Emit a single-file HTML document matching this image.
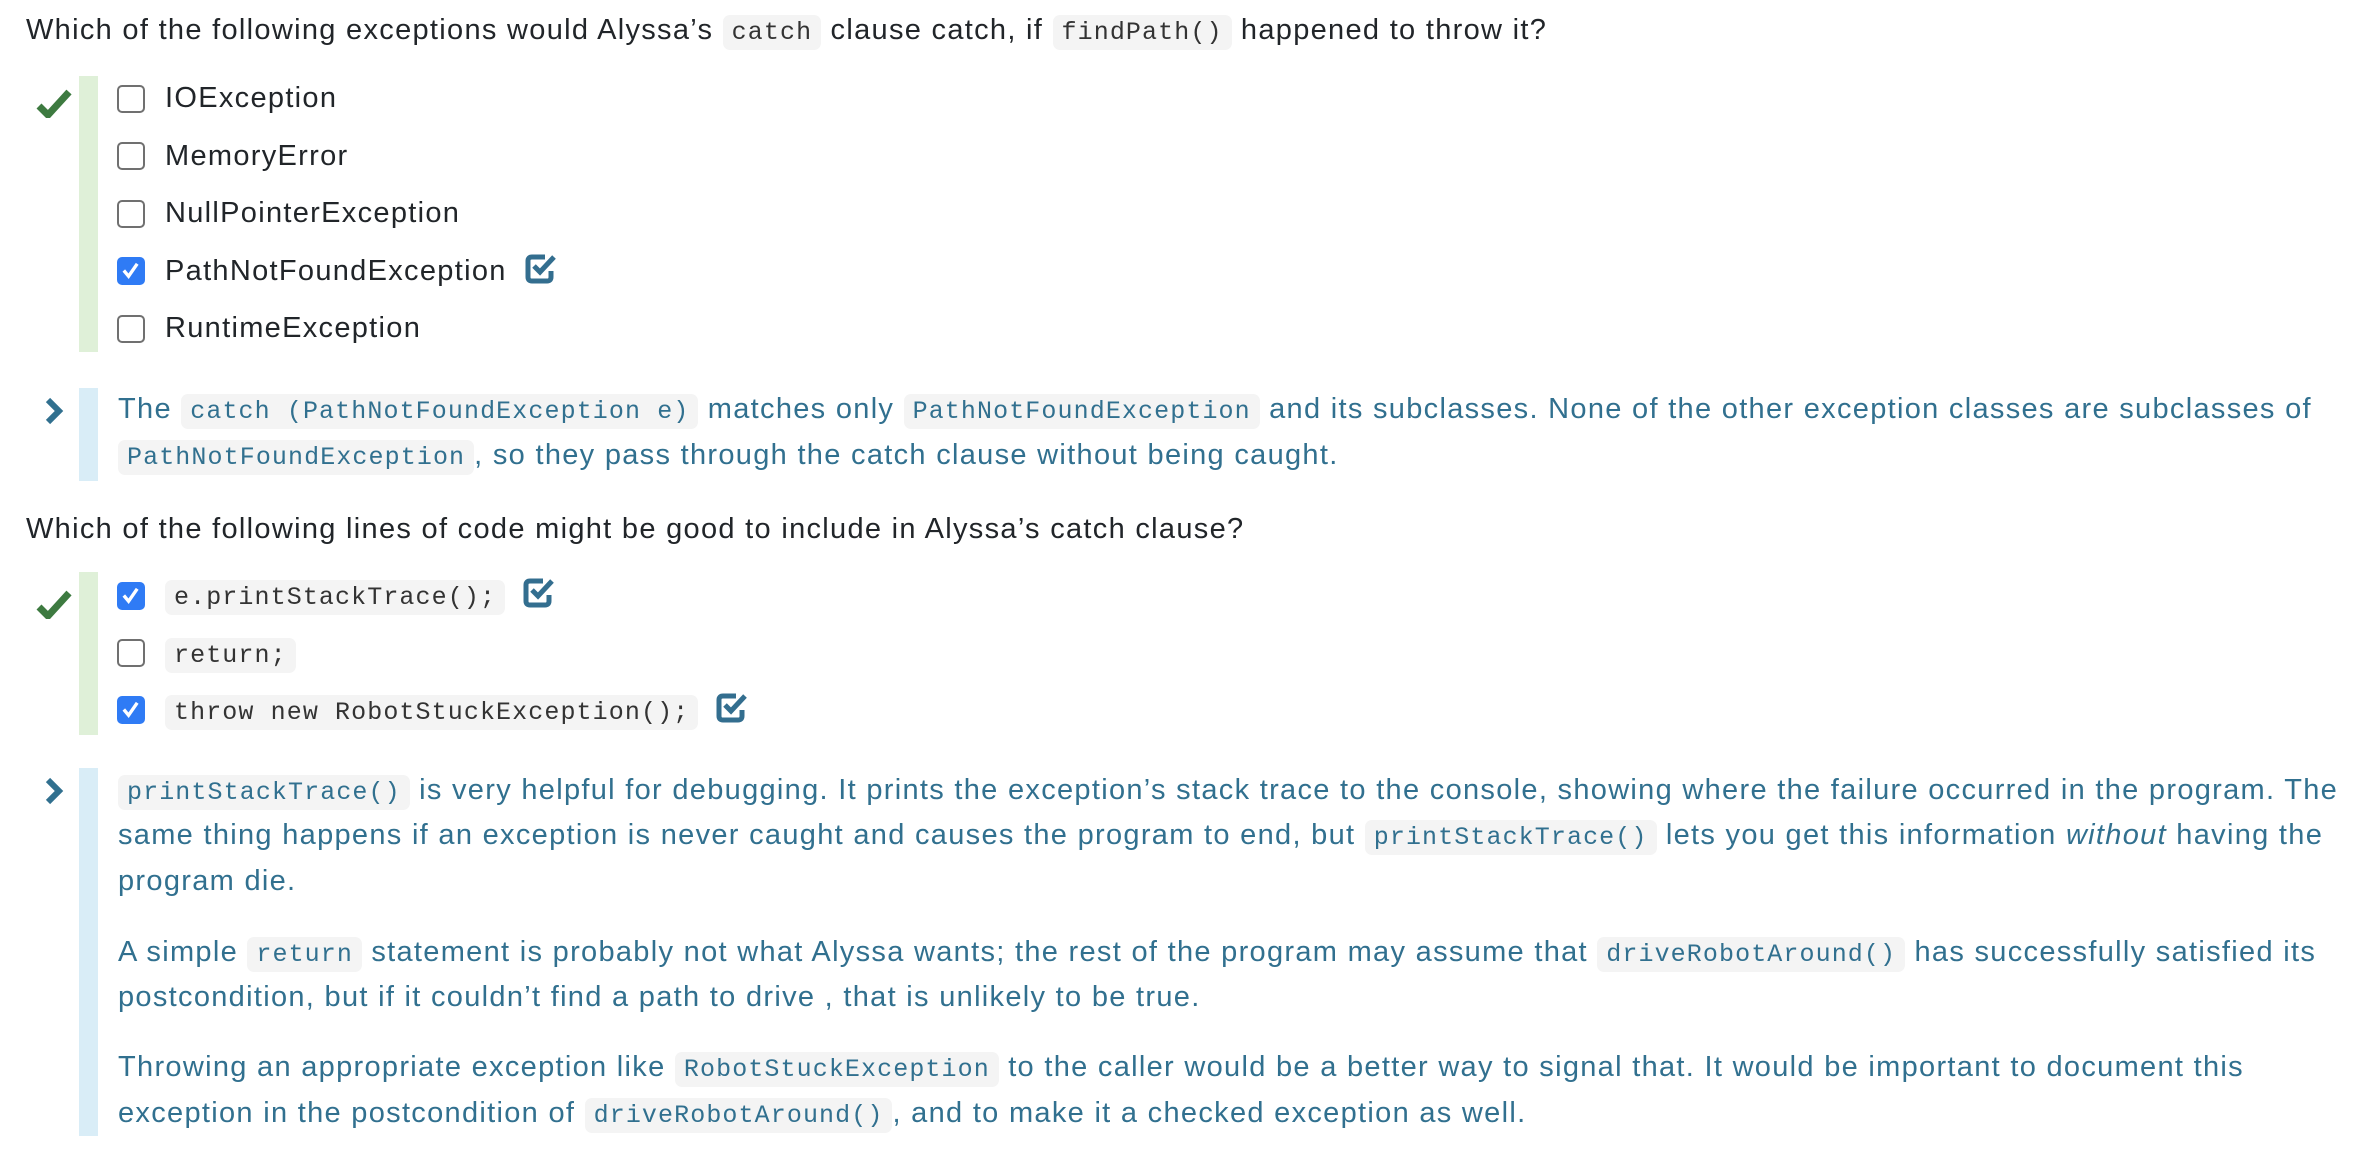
<!DOCTYPE html>
<html><head><meta charset="utf-8"><style>
*{margin:0;padding:0;box-sizing:border-box}
body{width:2374px;height:1153px;background:#fff;position:relative;overflow:hidden;font-family:"Liberation Sans",Arial,sans-serif;font-size:29px;letter-spacing:1.3px;color:#212529}
.a{position:absolute;white-space:nowrap;line-height:45px}
.info{color:#31708f}
code{font-family:"Liberation Mono",monospace;font-size:25px;letter-spacing:1.1px;background:#f4f4f4;border-radius:7px;padding:3px 9px;color:#333}
.info code{color:#31708f}
.bar{position:absolute;width:19px}
.g{background:#dff0d8}
.b{background:#d9edf7}
.cb{position:absolute;left:117px;width:28px;height:28px;border:2.5px solid #707070;border-radius:5px;background:#fff}
.cb.on{background:#2f7bf5;border-color:#2f7bf5}
.lbl{position:absolute;left:165px;line-height:45px;white-space:nowrap}
.ic{display:inline-block;vertical-align:-4px;margin-left:18px}
p.l{position:absolute;left:118px;white-space:nowrap;line-height:45.5px}
</style></head><body>
<svg width="0" height="0" style="position:absolute"><defs>
<symbol id="ok" viewBox="0 0 36 30"><path d="M3 19 L12 28 L33 5" fill="none" stroke="#3d7a40" stroke-width="7"/></symbol>
<symbol id="sq" viewBox="0 0 32 30"><path d="M20 3 H7 Q3 3 3 7 V23 Q3 27 7 27 H22 Q26 27 26 23 V17" fill="none" stroke="#336e8f" stroke-width="5"/><path d="M9 12 L15 18 L29 3" fill="none" stroke="#336e8f" stroke-width="5"/></symbol>
<symbol id="chev" viewBox="0 0 20 28"><path d="M4 3 L15 14 L4 25" fill="none" stroke="#31708f" stroke-width="6"/></symbol>
<symbol id="tick" viewBox="0 0 24 24"><path d="M5 12 L10 18 L19 5" fill="none" stroke="#fff" stroke-width="3.5"/></symbol>
</defs></svg>

<div class="a" style="left:26px;top:8px">Which of the following exceptions would Alyssa’s <code>catch</code> clause catch, if <code>findPath()</code> happened to throw it?</div>

<svg style="position:absolute;left:36px;top:86px" width="36" height="32"><use href="#ok"/></svg>
<div class="bar g" style="left:79px;top:76px;height:276px"></div>
<div class="cb" style="top:85px"></div><div class="lbl" style="top:76px">IOException</div>
<div class="cb" style="top:142px"></div><div class="lbl" style="top:134px">MemoryError</div>
<div class="cb" style="top:200px"></div><div class="lbl" style="top:191px">NullPointerException</div>
<div class="cb on" style="top:257px"><svg width="23" height="23" style="position:absolute;left:0;top:0"><use href="#tick"/></svg></div><div class="lbl" style="top:249px">PathNotFoundException<svg class="ic" width="32" height="30"><use href="#sq"/></svg></div>
<div class="cb" style="top:315px"></div><div class="lbl" style="top:306px">RuntimeException</div>

<svg style="position:absolute;left:44px;top:397px" width="20" height="28"><use href="#chev"/></svg>
<div class="bar b" style="left:79px;top:388px;height:93px"></div>
<p class="l info" style="top:387px">The <code>catch (PathNotFoundException e)</code> matches only <code>PathNotFoundException</code> and its subclasses. None of the other exception classes are subclasses of</p>
<p class="l info" style="top:433px"><code>PathNotFoundException</code>, so they pass through the catch clause without being caught.</p>

<div class="a" style="left:26px;top:507px">Which of the following lines of code might be good to include in Alyssa’s catch clause?</div>

<svg style="position:absolute;left:36px;top:587px" width="36" height="32"><use href="#ok"/></svg>
<div class="bar g" style="left:79px;top:572px;height:163px"></div>
<div class="cb on" style="top:582px"><svg width="23" height="23" style="position:absolute;left:0;top:0"><use href="#tick"/></svg></div><div class="lbl" style="top:573px"><code>e.printStackTrace();</code><svg class="ic" width="32" height="30"><use href="#sq"/></svg></div>
<div class="cb" style="top:639px"></div><div class="lbl" style="top:631px"><code>return;</code></div>
<div class="cb on" style="top:696px"><svg width="23" height="23" style="position:absolute;left:0;top:0"><use href="#tick"/></svg></div><div class="lbl" style="top:688px"><code>throw new RobotStuckException();</code><svg class="ic" width="32" height="30"><use href="#sq"/></svg></div>

<svg style="position:absolute;left:44px;top:777px" width="20" height="28"><use href="#chev"/></svg>
<div class="bar b" style="left:79px;top:768px;height:368px"></div>
<p class="l info" style="top:768px"><code>printStackTrace()</code> is very helpful for debugging. It prints the exception’s stack trace to the console, showing where the failure occurred in the program. The</p>
<p class="l info" style="top:813px">same thing happens if an exception is never caught and causes the program to end, but <code>printStackTrace()</code> lets you get this information <i>without</i> having the</p>
<p class="l info" style="top:859px">program die.</p>
<p class="l info" style="top:930px">A simple <code>return</code> statement is probably not what Alyssa wants; the rest of the program may assume that <code>driveRobotAround()</code> has successfully satisfied its</p>
<p class="l info" style="top:975px">postcondition, but if it couldn’t find a path to drive , that is unlikely to be true.</p>
<p class="l info" style="top:1045px">Throwing an appropriate exception like <code>RobotStuckException</code> to the caller would be a better way to signal that. It would be important to document this</p>
<p class="l info" style="top:1091px">exception in the postcondition of <code>driveRobotAround()</code>, and to make it a checked exception as well.</p>
</body></html>
